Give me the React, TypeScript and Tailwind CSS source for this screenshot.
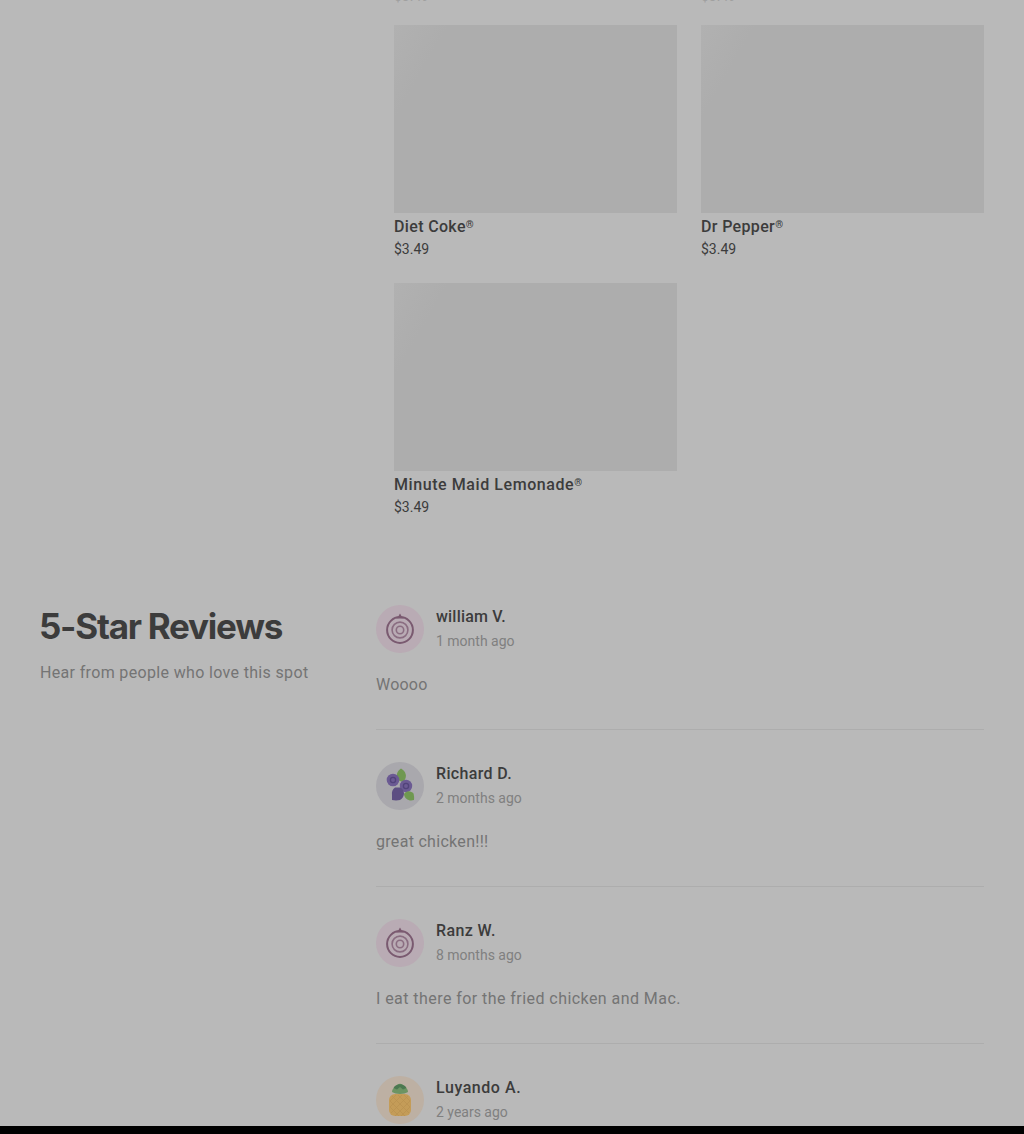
type Item = { name: string; price: string; tracking: string };

const items: Item[] = [
  { name: "Diet Coke", price: "$3.49", tracking: "tracking-[0.35px]" },
  { name: "Dr Pepper", price: "$3.49", tracking: "tracking-[0.35px]" },
  { name: "Minute Maid Lemonade", price: "$3.49", tracking: "tracking-[0.57px]" },
];

const reviews = [
  {
    name: "william V.",
    date: "1 month ago",
    text: "Woooo",
    avatar: "onion",
    nameTracking: "tracking-[0.2px]",
    textTracking: "tracking-[0.2px]",
  },
  {
    name: "Richard D.",
    date: "2 months ago",
    text: "great chicken!!!",
    avatar: "berries",
    nameTracking: "tracking-[0.35px]",
    textTracking: "tracking-[0.3px]",
  },
  {
    name: "Ranz W.",
    date: "8 months ago",
    text: "I eat there for the fried chicken and Mac.",
    avatar: "onion",
    nameTracking: "tracking-[0.4px]",
    textTracking: "tracking-[0.44px]",
  },
  {
    name: "Luyando A.",
    date: "2 years ago",
    text: "",
    avatar: "pineapple",
    nameTracking: "tracking-[0.55px]",
    textTracking: "",
  },
];

function Onion() {
  return (
    <svg viewBox="0 0 48 48" className="size-12 shrink-0" fill="none">
      <circle cx="24" cy="24" r="24" fill="#b9abb4" />
      <path d="M20 13.500c2.500-1 2.500-3 4-5 1.500 2 1.500 4 4 5z" fill="#7a5a70" />
      <circle cx="24" cy="25" r="12.900" stroke="#7a5a70" strokeWidth="2" />
      <circle cx="24" cy="25" r="7.900" stroke="#8a6d81" strokeWidth="1.600" />
      <circle cx="24" cy="25" r="3.700" stroke="#8a6d81" strokeWidth="1.600" />
    </svg>
  );
}

function Berries() {
  return (
    <svg viewBox="0 0 48 48" className="size-12 shrink-0" fill="none">
      <circle cx="24" cy="24" r="24" fill="#a9a8ad" />
      <path d="M25 6.500c5 3 6.500 8 3 12.500-1.500 1-4 .5-5.500-1-3-4-2-8.500 2.500-11.500z" fill="#6f9850" />
      <circle cx="17" cy="18" r="6.300" fill="#6b5a93" />
      <circle cx="17" cy="18" r="2.600" stroke="#51437a" strokeWidth="1.300" />
      <circle cx="30" cy="24" r="6.200" fill="#6b5a93" />
      <circle cx="30" cy="24" r="2.600" stroke="#51437a" strokeWidth="1.300" />
      <path d="M19 25.500h5c2.500 1 4 3.500 4 6s-1.500 5-4 6.500c-2.500.6-5.500.6-8 0v-5c-.5-3 .5-6 3-7.500z" fill="#5d4e82" />
      <path d="M28 32c2.500-4 7-3.500 9.500-.5.500 2 .800 4 .5 6.500-4.500 1.500-9.500-.5-10-6z" fill="#6f9850" />
    </svg>
  );
}

function Pineapple() {
  return (
    <svg viewBox="0 0 48 48" className="size-12 shrink-0" fill="none">
      <circle cx="24" cy="24" r="24" fill="#bdb0a3" />
      <path d="M16 16c0-3 2-5 4-5 1.500-4.500 6.500-4.500 8 0 2 0 4 2 4 5-4 2.500-12 2.500-16 0z" fill="#6c9463" />
      <path d="M17.500 12c2.500-5 10.500-5 13 0l-3.500 1.500-3-2.500-3 2.500z" fill="#4b7850" />
      <rect x="13" y="18" width="22" height="22" rx="6" fill="#c49c58" />
      <path
        d="m14 25 6-6m-6 12 12-12m-11 18 17-17m-13 20 15-15m-9 15 9-9M34 25l-6-6m6 12L22 19m11 18L16 20m13 20L14 25m9 15-9-9"
        stroke="#b99050"
        strokeWidth=".7"
      />
    </svg>
  );
}

function Avatar({ kind }: { kind: string }) {
  if (kind === "onion") return <Onion />;
  if (kind === "berries") return <Berries />;
  return <Pineapple />;
}

export default function App() {
  return (
    <div className="flex h-[1134px] w-[1024px] flex-col overflow-hidden bg-black font-[Roboto,sans-serif] text-[#3c3c3c]">
      <div className="h-[1126px] shrink-0 overflow-hidden bg-[#b9b9b9] px-10">
        <section className="ml-[354px]">
          <div className="-mt-[14px] grid h-[39px] grid-cols-[283px_283px] gap-x-6 text-sm leading-5 text-[#a0a0a0]">
            <p>$3.49</p>
            <p>$3.49</p>
          </div>
          <div className="grid grid-cols-[283px_283px] gap-6">
            {items.map((item) => (
              <article key={item.name}>
                <div className="mb-0.5 h-[188px] bg-[linear-gradient(120deg,#b1b1b1_0%,#adadad_14%)]" />
                <h3 className={`flex text-base leading-6 font-medium ${item.tracking}`}>
                  {item.name}
                  <span className="text-[10px] leading-[19px] font-bold tracking-normal">®</span>
                </h3>
                <p className="text-sm leading-5">{item.price}</p>
              </article>
            ))}
          </div>
        </section>

        <section className="mt-[88px] flex">
          <div className="w-[336px] shrink-0">
            <h2 className="-ml-px font-[Inter,sans-serif] text-[35px] leading-[42px] font-bold tracking-[-1.25px]">
              <span>5-Star Reviews</span>
            </h2>
            <p className="mt-3.5 text-base leading-6 tracking-[0.34px] text-[#747474]">
              <span>Hear from people who love this spot</span>
            </p>
          </div>
          <div className="w-[608px]">
            {reviews.map((r) => (
              <article key={r.name} className="mb-8 h-[125px] border-b border-[#adadad]">
                <div className="flex h-12 gap-3">
                  <Avatar kind={r.avatar} />
                  <div>
                    <h3 className={`text-base leading-6 font-medium ${r.nameTracking}`}>{r.name}</h3>
                    <p className="text-sm leading-6 text-[#808080]">{r.date}</p>
                  </div>
                </div>
                <p className={`mt-5 text-base leading-6 text-[#747474] ${r.textTracking}`}>{r.text}</p>
              </article>
            ))}
          </div>
        </section>
      </div>
    </div>
  );
}
